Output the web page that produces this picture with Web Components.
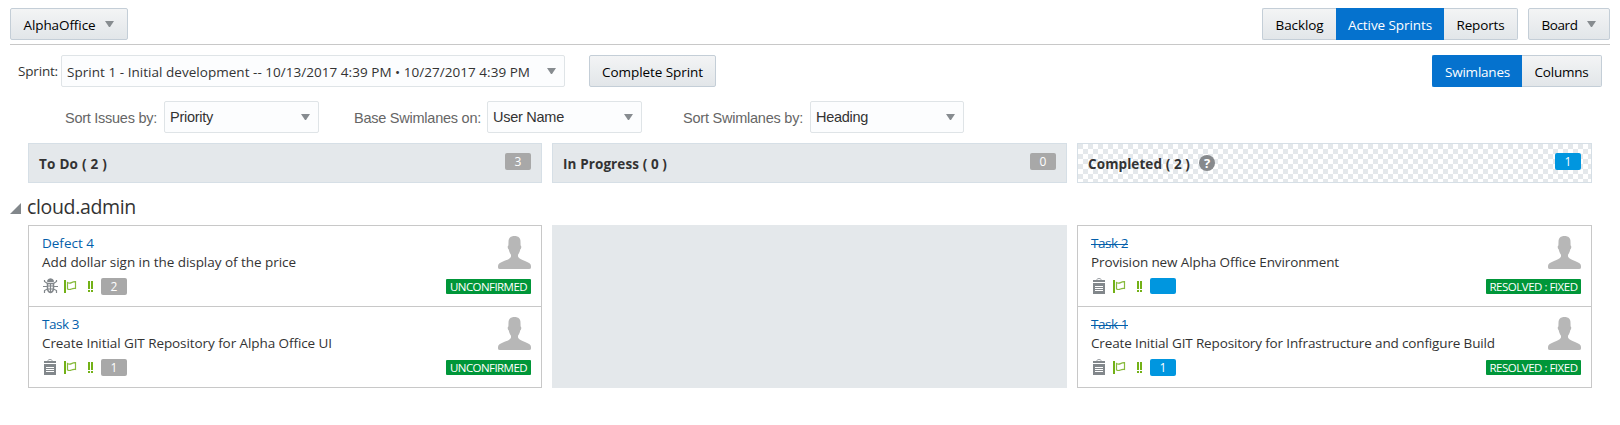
<!DOCTYPE html>
<html lang="en">
<head>
<meta charset="utf-8">
<title>AlphaOffice – Active Sprints</title>
<style>
html,body{margin:0;background:#fff}
body{width:1620px;height:425px;overflow:hidden;font:13.5px/20px "Open Sans","Noto Sans",sans-serif;color:#333}
</style>
</head>
<body>
<sprint-page></sprint-page>
<script>
function define(name, html, setup) {
  const t = document.createElement('template');
  t.innerHTML = html;
  customElements.define(name, class extends HTMLElement {
    connectedCallback() {
      if (this.shadowRoot) return;
      this.attachShadow({mode: 'open'}).append(t.content.cloneNode(true));
      if (setup) setup(this, this.shadowRoot);
    }
  });
}

// A single line of text whose tracking is adjusted to fill the width in `w`.
define('fit-text', `<style>:host{display:block;white-space:nowrap;flex:none}span{display:inline-block}</style><span><slot></slot></span>`, (el, root) => {
  const w = +el.getAttribute('w');
  el.style.width = w + 'px';
  const s = root.querySelector('span');
  const n = el.textContent.length;
  s.style.letterSpacing = ((w - s.getBoundingClientRect().width) / n).toFixed(3) + 'px';
});

define('caret-down', `<style>:host{display:block;flex:none;width:10px;height:6px}svg{display:block}</style>
<svg width="10" height="6"><path d="M0 0H9L5 6H4Z" fill="#878c90"/></svg>`);

define('ui-button', `<style>
:host{display:flex;box-sizing:border-box;height:32px;flex:none;align-items:center;justify-content:center;gap:9px;border:1px solid #c4ced7;border-radius:2px;background:linear-gradient(#f3f4f5,#e2e6e9);color:#000}
:host([active]){background:#0572ce;border-color:#0572ce;color:#fff}
:host([seg=first]){border-radius:2px 0 0 2px;border-right:0}
:host([seg=mid]){border-radius:0}
:host([seg=last]){border-radius:0 2px 2px 0;border-left:0}
::slotted(fit-text){padding-top:2px}
</style><slot></slot>`);

define('ui-select', `<style>
:host{display:flex;box-sizing:border-box;height:32px;flex:none;align-items:center;justify-content:space-between;padding:0 7px 0 5px;border:1px solid #dfe4e7;border-radius:2px;background:#fcfdfe;color:#333}
:host([low]) ::slotted(fit-text){padding-top:2px}
</style><slot></slot><caret-down></caret-down>`);

define('count-badge', `<style>
:host{display:block;flex:none;width:26px;height:17px;border-radius:2px;background:#a8a8a8;color:#fff;font-size:12px;line-height:17px;text-align:center}
:host([blue]){background:#0096df}
:host([empty]){height:16px}
</style><slot></slot>`);

define('status-tag', `<style>
:host{display:flex;justify-content:center;box-sizing:border-box;flex:none;height:15px;border-radius:1px;background:#009639;color:#fff;font-size:11.5px;line-height:16px}
</style><slot></slot>`);

define('user-avatar', `<style>:host{display:block;width:33px;height:33px}svg{display:block}</style>
<svg width="33" height="33"><path fill="#b7b7b7" d="M16.5 0C20.500 0 22.500 2.200 22.500 5.500L22.600 9.500C23.600 9.600 23.500 12.500 22.300 13.200C21.800 16 20.600 17.800 20 18.700V20.500C21 22.800 23.500 23.700 27 25C31 26.500 33 28 33 30V31.500Q33 33 31 33H2Q0 33 0 31.500V30C0 28 2 26.500 6 25C9.500 23.700 12 22.800 13 20.500V18.700C12.400 17.800 11.200 16 10.700 13.200C9.500 12.500 9.400 9.600 10.400 9.500L10.500 5.500C10.500 2.200 12.500 0 16.500 0Z"/></svg>`);

define('type-icon', `<style>:host{display:block;width:15px;height:16px;flex:none}svg{display:none}:host([kind=bug]) .bug,:host([kind=task]) .task{display:block}</style>
<svg class="bug" width="15" height="16" fill="none" stroke="#82878b"><path d="M4.500 3.500Q4.500 .800 7.500 .800Q10.500 .800 10.500 3.500Z" fill="#82878b"/><path d="M4.500 5.500H10.500V9.500Q10.500 14 7.500 14.500Q4.500 14 4.500 9.500Z" stroke-width="1.500"/><path d="M7.500 5V14.500M4.500 8H10.500M4.500 11H10.500" stroke-width="1.200"/><path d="M1.500 2V3.500L4.500 5.500M13.500 2V3.500L10.500 5.500M0 8.500H4M11 8.500H15M1.500 15V12.500L4.500 11M13.500 15V12.500L10.500 11" stroke-width="1.200"/></svg>
<svg class="task" width="15" height="16"><path d="M1 2H13V4H1ZM1 5H13V16H1Z" fill="#82878b"/><path d="M5 2V1.500Q5 .500 7 .500Q9 .500 9 1.500V2" fill="none" stroke="#9a9fa3"/><path d="M3 8.500H11M3 10.500H11M3 12.500H11" stroke="#fff"/></svg>`);

define('flag-icon', `<style>:host{display:block;width:13px;height:13px;flex:none}svg{display:block}</style>
<svg width="13" height="13"><path d="M0 0H2V13H0Z" fill="#73b117"/><path d="M3.500 2.500Q5.500 3.700 7.500 2.600T11.500 1.600V8.500Q9.500 8 7.500 9T3.500 9Z" fill="none" stroke="#87ba3c" stroke-width="1.200"/></svg>`);

define('priority-icon', `<style>:host{display:block;width:5px;height:11px;flex:none}svg{display:block}</style>
<svg width="5" height="11"><path d="M0 0H2V8H0ZM3 0H5V8H3ZM0 9H2V11H0ZM3 9H5V11H3Z" fill="#73b117"/></svg>`);

define('issue-card', `<style>
:host{display:flex;box-sizing:border-box;height:81px;justify-content:space-between;padding:10px 10px 0 14px;border-bottom:1px solid #c8c8c8}
.main{flex:1 1 0;min-width:0;margin-top:-2px}
.title,.desc{height:19px;line-height:19px;margin-left:-1px}
.title{color:#045fab}
:host([done]) .title{background:linear-gradient(#045fab,#045fab) 0 10px/var(--strike) 1px no-repeat}
.meta{display:flex;align-items:flex-start;margin-top:6px}
flag-icon{margin:2px 0 0 6px}
priority-icon{margin:3px 8px 0 11px}
.side{display:flex;flex:none;flex-direction:column;align-items:flex-end;gap:10px}
</style>
<div class="main"><div class="title"><slot name="title"></slot></div><div class="desc"><slot name="desc"></slot></div>
<div class="meta"><type-icon></type-icon><flag-icon></flag-icon><priority-icon></priority-icon><slot name="count"></slot></div></div>
<div class="side"><user-avatar></user-avatar><slot name="status"></slot></div>`, (el, root) => {
  root.querySelector('type-icon').setAttribute('kind', el.getAttribute('kind'));
});

define('column-head', `<style>
:host{display:flex;box-sizing:border-box;height:40px;justify-content:space-between;padding:9px 10px 0;border:1px solid #d6dfe6;background:#e4e8eb;font-weight:700}
:host([checked]){background:repeating-conic-gradient(#fff 0 25%,#e4e8eb 0 50%) 0 0/10px 10px}
.t{display:flex;gap:9px;line-height:20px}
::slotted(fit-text){padding-top:.5px}
::slotted(count-badge){font-weight:400}
</style><div class="t"><slot></slot></div><slot name="count"></slot>`);

define('help-icon', `<style>:host{display:block;width:16px;height:16px;margin-top:2px;border-radius:50%;background:#86898c;color:#fff;font:700 13px/16px "Open Sans",sans-serif;text-align:center}</style>?`);

define('issue-list', `<style>:host{display:block;box-sizing:border-box;height:163px;border:1px solid #c8c8c8;border-bottom:0}:host([empty]){border:0;background:#e4e8eb}</style><slot></slot>`);

define('sprint-page', `<style>
:host{display:block;padding:8px 10px 0}
.bar{display:flex;align-items:center}
.top{justify-content:space-between;height:35px;align-items:flex-start;border-bottom:1px solid #c8c8c8;padding-bottom:1px;box-sizing:content-box}
.r{display:flex}
.sprint{padding:10px 8px 0}
.sort{font:14.500px/20px "Liberation Sans",Arial,sans-serif;color:#666;padding:14px 0 0 55px}
.grid{display:grid;grid-template-columns:514px 515px 515px;gap:10px;padding-left:18px}
.lane{display:flex;align-items:center;gap:6px;height:42px;font-size:19.500px;line-height:32px}
.lane svg{margin-top:9px}
.lane fit-text{padding-top:5px}
</style>
<header class="bar top">
 <ui-button style="width:118px"><fit-text w="72">AlphaOffice</fit-text><caret-down></caret-down></ui-button>
 <div class="r">
  <ui-button seg="first" style="width:74px"><fit-text w="48">Backlog</fit-text></ui-button>
  <ui-button seg="mid" active style="width:108px"><fit-text w="84">Active Sprints</fit-text></ui-button>
  <ui-button seg="last" style="width:74px"><fit-text w="48">Reports</fit-text></ui-button>
  <ui-button style="width:82px;margin-left:10px"><fit-text w="36">Board</fit-text><caret-down></caret-down></ui-button>
 </div>
</header>
<div class="bar sprint">
 <fit-text w="40" style="margin-right:3px">Sprint:</fit-text>
 <ui-select low style="width:504px"><fit-text w="463">Sprint 1 - Initial development -- 10/13/2017 4:39 PM • 10/27/2017 4:39 PM</fit-text></ui-select>
 <ui-button style="width:127px;margin-left:24px"><fit-text w="101">Complete Sprint</fit-text></ui-button>
 <div class="r" style="margin-left:auto">
  <ui-button seg="first" active style="width:90px"><fit-text w="65">Swimlanes</fit-text></ui-button>
  <ui-button seg="last" style="width:80px"><fit-text w="54">Columns</fit-text></ui-button>
 </div>
</div>
<div class="bar sort">
 <fit-text w="92" style="margin-right:7px;padding-top:2px">Sort Issues by:</fit-text>
 <ui-select style="width:155px"><fit-text w="43">Priority</fit-text></ui-select>
 <fit-text w="127" style="margin:0 6px 0 35px;padding-top:2px">Base Swimlanes on:</fit-text>
 <ui-select style="width:155px"><fit-text w="71">User Name</fit-text></ui-select>
 <fit-text w="120" style="margin:0 7px 0 41px;padding-top:2px">Sort Swimlanes by:</fit-text>
 <ui-select style="width:154px"><fit-text w="52">Heading</fit-text></ui-select>
</div>
<div class="grid" style="padding-top:10px">
 <column-head><fit-text w="68">To Do ( 2 )</fit-text><count-badge slot="count">3</count-badge></column-head>
 <column-head><fit-text w="104">In Progress ( 0 )</fit-text><count-badge slot="count">0</count-badge></column-head>
 <column-head checked><fit-text w="102">Completed ( 2 )</fit-text><help-icon></help-icon><count-badge slot="count" blue>1</count-badge></column-head>
</div>
<div class="lane"><svg width="11" height="11"><path d="M11 0V11H0Z" fill="#82878b"/></svg><fit-text w="109">cloud.admin</fit-text></div>
<div class="grid">
 <issue-list>
  <issue-card kind="bug"><fit-text slot="title" w="52">Defect 4</fit-text><fit-text slot="desc" w="254">Add dollar sign in the display of the price</fit-text><count-badge slot="count">2</count-badge><status-tag slot="status" style="width:85px"><fit-text w="77">UNCONFIRMED</fit-text></status-tag></issue-card>
  <issue-card kind="task"><fit-text slot="title" w="37">Task 3</fit-text><fit-text slot="desc" w="290">Create Initial GIT Repository for Alpha Office UI</fit-text><count-badge slot="count">1</count-badge><status-tag slot="status" style="width:85px"><fit-text w="77">UNCONFIRMED</fit-text></status-tag></issue-card>
 </issue-list>
 <issue-list empty></issue-list>
 <issue-list>
  <issue-card kind="task" done style="--strike:37px"><fit-text slot="title" w="37">Task 2</fit-text><fit-text slot="desc" w="248">Provision new Alpha Office Environment</fit-text><count-badge slot="count" blue empty></count-badge><status-tag slot="status" style="width:95px"><fit-text w="88">RESOLVED : FIXED</fit-text></status-tag></issue-card>
  <issue-card kind="task" done style="--strike:37px"><fit-text slot="title" w="37">Task 1</fit-text><fit-text slot="desc" w="404">Create Initial GIT Repository for Infrastructure and configure Build</fit-text><count-badge slot="count" blue>1</count-badge><status-tag slot="status" style="width:95px"><fit-text w="88">RESOLVED : FIXED</fit-text></status-tag></issue-card>
 </issue-list>
</div>`);
</script>
</body>
</html>
